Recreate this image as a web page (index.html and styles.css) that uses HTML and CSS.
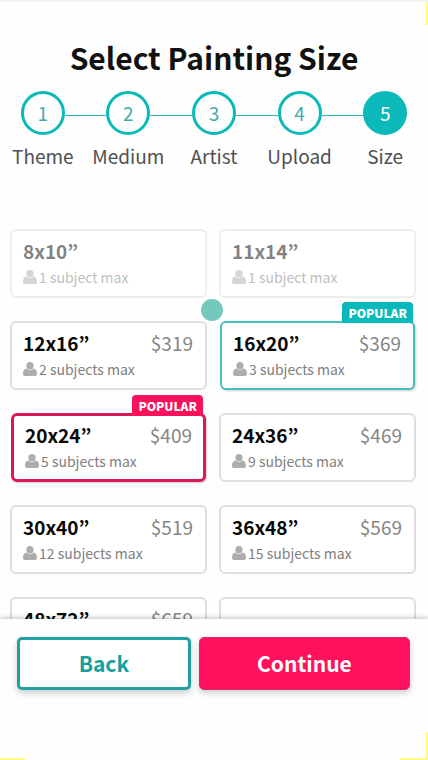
FILE: index.html
```
<!DOCTYPE html>
<html lang="en">
<head>
    <meta charset="UTF-8">
    <meta name="viewport" content="width=device-width, initial-scale=1.0">
    <title>Select Painting Size</title>
    <link rel="stylesheet" href="styles.css">
</head>
<body>
    <svg class="sprite" aria-hidden="true">
        <symbol id="person" viewBox="0 0 14 14">
            <path d="M7 0a3.6 3.6 0 0 1 3.6 3.7c0 1.5-.7 3-1.9 3.800H5.300C4.100 6.700 3.400 5.200 3.400 3.700A3.600 3.600 0 0 1 7 0z"/>
            <path d="M3.500 6.600C4.400 7.800 5.600 8.200 7 8.200s2.600-.4 3.500-1.600C12.900 6.900 14 8.600 14 12c0 1.200-.8 2-2 2H2c-1.200 0-2-.8-2-2 0-3.400 1.100-5.100 3.500-5.400z"/>
        </symbol>
    </svg>
    <header class="header">
        <h1>Select Painting Size</h1>
        <ol class="steps">
            <li class="step"><span class="circle">1</span><span>Theme</span></li>
            <li class="step"><span class="circle">2</span><span>Medium</span></li>
            <li class="step"><span class="circle">3</span><span>Artist</span></li>
            <li class="step"><span class="circle">4</span><span>Upload</span></li>
            <li class="step active"><span class="circle">5</span><span>Size</span></li>
        </ol>
    </header>
    <main class="content">
        <form class="sizes" id="sizeForm">
            <label class="card disabled">
                <input type="radio" name="size" value="8x10" disabled>
                <span class="row"><b>8x10”</b></span>
                <span class="subjects"><svg class="icon"><use href="#person"/></svg>1 subject max</span>
            </label>
            <label class="card disabled">
                <input type="radio" name="size" value="11x14" disabled>
                <span class="row"><b>11x14”</b></span>
                <span class="subjects"><svg class="icon"><use href="#person"/></svg>1 subject max</span>
            </label>
            <label class="card">
                <input type="radio" name="size" value="12x16">
                <span class="row"><b>12x16”</b><span class="price">$319</span></span>
                <span class="subjects"><svg class="icon"><use href="#person"/></svg>2 subjects max</span>
            </label>
            <label class="card popular">
                <input type="radio" name="size" value="16x20">
                <span class="badge">POPULAR</span>
                <span class="row"><b>16x20”</b><span class="price">$369</span></span>
                <span class="subjects"><svg class="icon"><use href="#person"/></svg>3 subjects max</span>
            </label>
            <label class="card popular selected">
                <input type="radio" name="size" value="20x24" checked>
                <span class="badge">POPULAR</span>
                <span class="row"><b>20x24”</b><span class="price">$409</span></span>
                <span class="subjects"><svg class="icon"><use href="#person"/></svg>5 subjects max</span>
            </label>
            <label class="card">
                <input type="radio" name="size" value="24x36">
                <span class="row"><b>24x36”</b><span class="price">$469</span></span>
                <span class="subjects"><svg class="icon"><use href="#person"/></svg>9 subjects max</span>
            </label>
            <label class="card">
                <input type="radio" name="size" value="30x40">
                <span class="row"><b>30x40”</b><span class="price">$519</span></span>
                <span class="subjects"><svg class="icon"><use href="#person"/></svg>12 subjects max</span>
            </label>
            <label class="card">
                <input type="radio" name="size" value="36x48">
                <span class="row"><b>36x48”</b><span class="price">$569</span></span>
                <span class="subjects"><svg class="icon"><use href="#person"/></svg>15 subjects max</span>
            </label>
            <label class="card">
                <input type="radio" name="size" value="48x72">
                <span class="row"><b>48x72”</b><span class="price">$659</span></span>
            </label>
            <div class="card"></div>
        </form>
        <span class="pointer"></span>
    </main>
    <footer class="footer">
        <button type="button" class="back">Back</button>
        <button type="submit" form="sizeForm" class="continue">Continue</button>
    </footer>
    <span class="edge edge-top"></span>
    <span class="edge edge-left"></span>
    <span class="edge edge-right"></span>
</body>
</html>
```
FILE: styles.css
```
* {
    box-sizing: border-box;
}

body {
    font-family: "Noto Sans CJK KR", "Noto Sans", sans-serif;
    background-color: #fefefe;
    border-top: 2px solid #f4f4f4;
    display: flex;
    flex-direction: column;
    height: 100vh;
    margin: 0;
    position: relative;
    overflow: hidden;
}

.sprite {
    display: none;
}

.header {
    padding-top: 33px;
    text-align: center;
}

h1 {
    margin: 0;
    font-size: 30px;
    line-height: 44px;
    color: #111;
}

.steps {
    display: flex;
    list-style: none;
    margin: 12px 0 0;
    padding: 0;
}

.step {
    flex: 1 1 0;
    display: flex;
    flex-direction: column;
    align-items: center;
    gap: 7px;
    position: relative;
    font-size: 19px;
    line-height: 28px;
    color: #505050;
}

.step:not(:last-child)::after {
    content: "";
    position: absolute;
    top: 24px;
    left: calc(50% + 22px);
    width: calc(100% - 44px);
    height: 1px;
    background: #35b5b1;
}

.circle {
    width: 44px;
    height: 44px;
    border: 3px solid #0bb9b9;
    border-radius: 50%;
    line-height: 38px;
    color: #45aaa9;
}

.active .circle {
    background: #0bb9bb;
    color: #fff;
}

.content {
    flex: 1;
    min-height: 0;
    overflow: hidden;
    position: relative;
    padding: 59px 12px 0 10px;
}

.sizes {
    display: grid;
    grid-template-columns: 1fr 1fr;
    grid-auto-rows: 69px;
    gap: 23px 12px;
}

.card {
    position: relative;
    padding: 6px 12px 0 11px;
    border: 2px solid #dedede;
    border-radius: 6px;
    background: #fff;
}

.card input {
    position: absolute;
    opacity: 0;
    margin: 0;
}

.disabled {
    border-color: #eee;
}

.disabled .row,
.disabled .subjects {
    opacity: 0.5;
}

.popular {
    border-color: #40c2c0;
    margin: 0 1px;
    box-shadow: 1px 1px 2px rgba(0, 0, 0, 0.2);
}

.selected {
    border: 3px solid #da1858;
    padding: 5px 11px 0;
}

.badge {
    position: absolute;
    right: 0;
    bottom: 100%;
    padding: 0 6px;
    border-radius: 4px 4px 0 0;
    background: #08b9bb;
    color: #fff;
    font-size: 12px;
    font-weight: 900;
    line-height: 21px;
}

.selected .badge {
    background: #f9115c;
}

.row {
    display: flex;
    justify-content: space-between;
    font-size: 19px;
    line-height: 28px;
    color: #080808;
}

.price {
    color: #858585;
}

.subjects {
    display: flex;
    align-items: center;
    gap: 2px;
    font-size: 14px;
    line-height: 24px;
    color: #808080;
}

.icon {
    width: 14px;
    height: 14px;
    fill: #adadad;
}

.pointer {
    position: absolute;
    top: 129px;
    left: calc(50% - 13px);
    width: 22px;
    height: 22px;
    border-radius: 50%;
    background: #75c8bd;
}

.footer {
    position: relative;
    display: flex;
    gap: 8px;
    padding: 18px 18px 70px 17px;
    background: #fefefe;
    box-shadow: 0 -1px 5px rgba(0, 0, 0, 0.25);
}

.footer button {
    height: 53px;
    padding: 0 0 2px;
    border-radius: 5px;
    font-family: inherit;
    font-size: 21px;
    font-weight: bold;
    box-shadow: 0 3px 6px rgba(0, 0, 0, 0.2);
}

.back {
    flex: 170;
    border: 3px solid #229fa0;
    background: #fff;
    color: #169f9f;
}

.continue {
    flex: 212;
    border: 1px solid #d92b62;
    background: #ff115d;
    color: #fff;
}

.edge {
    position: absolute;
    background: #fffb83;
}

.edge-top {
    top: -2px;
    right: 0;
    width: 2px;
    height: 25px;
}

.edge-left {
    bottom: 0;
    left: 0;
    width: 25px;
    height: 2px;
}

.edge-right {
    right: 0;
    bottom: 0;
    width: 28px;
    height: 28px;
    background: none;
    border: solid #fffb83;
    border-width: 0 2px 2px 0;
}
```
